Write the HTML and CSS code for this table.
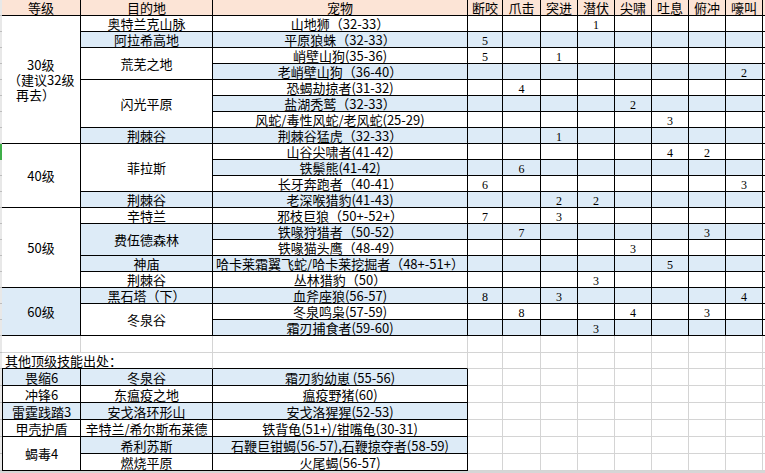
FILE: index.html
```html
<!DOCTYPE html>
<html lang="zh-CN">
<head>
<meta charset="utf-8">
<title>宠物技能出处</title>
<link rel="stylesheet" href="styles.css">
</head>
<body>
<div class="page">
  <div class="strip">
    <div></div><div></div><div></div><div></div><div></div><div></div><div></div>
    <div></div><div></div><div class="sel"></div><div></div><div></div><div></div><div></div>
    <div></div><div></div><div></div><div></div><div></div><div></div><div></div>
    <div class="t17"></div><div></div>
    <div class="t17"></div><div class="t17"></div><div class="t17"></div><div class="t17"></div><div class="t17"></div><div class="t17"></div>
  </div>
  <div class="sheet">
    <div class="top">
      <div class="r h"><div>等级</div><div>目的地</div><div>宠物</div><div>断咬</div><div>爪击</div><div>突进</div><div>潜伏</div><div>尖啸</div><div>吐息</div><div>俯冲</div><div>嚎叫</div><div></div></div>

      <div class="r"><div class="s8 w lv30"><span class="l1">30级</span><span class="l2">（建议32级</span><span class="l3">再去）</span></div><div>奥特兰克山脉</div><div>山地狮（32-33）</div><div></div><div></div><div></div><div class="n">1</div><div></div><div></div><div></div><div></div><div class="f"></div></div>
      <div class="r b"><div>阿拉希高地</div><div>平原狼蛛（32-33）</div><div class="n">5</div><div></div><div></div><div></div><div></div><div></div><div></div><div></div><div class="f"></div></div>
      <div class="r"><div class="s2">荒芜之地</div><div>峭壁山狗(35-36)</div><div class="n">5</div><div></div><div class="n">1</div><div></div><div></div><div></div><div></div><div></div><div class="f"></div></div>
      <div class="r b"><div>老峭壁山狗（36-40）</div><div></div><div></div><div></div><div></div><div></div><div></div><div></div><div class="n">2</div><div class="f"></div></div>
      <div class="r"><div class="s3">闪光平原</div><div>恐蝎劫掠者(31-32)</div><div></div><div class="n">4</div><div></div><div></div><div></div><div></div><div></div><div></div><div class="f"></div></div>
      <div class="r b"><div>盐湖秃鹫（32-33）</div><div></div><div></div><div></div><div></div><div class="n">2</div><div></div><div></div><div></div><div class="f"></div></div>
      <div class="r"><div>风蛇/毒性风蛇/老风蛇(25-29)</div><div></div><div></div><div></div><div></div><div></div><div class="n">3</div><div></div><div></div><div class="f"></div></div>
      <div class="r b"><div>荆棘谷</div><div>荆棘谷猛虎（32-33）</div><div></div><div></div><div class="n">1</div><div></div><div></div><div></div><div></div><div></div><div class="f"></div></div>

      <div class="r"><div class="s4">40级</div><div class="s3">菲拉斯</div><div>山谷尖啸者(41-42)</div><div></div><div></div><div></div><div></div><div></div><div class="n">4</div><div class="n">2</div><div></div><div class="f"></div></div>
      <div class="r b"><div>铁鬃熊(41-42)</div><div></div><div class="n">6</div><div></div><div></div><div></div><div></div><div></div><div></div><div class="f"></div></div>
      <div class="r"><div>长牙奔跑者（40-41）</div><div class="n">6</div><div></div><div></div><div></div><div></div><div></div><div></div><div class="n">3</div><div class="f"></div></div>
      <div class="r b"><div>荆棘谷</div><div>老深喉猎豹(41-43)</div><div></div><div></div><div class="n">2</div><div class="n">2</div><div></div><div></div><div></div><div></div><div class="f"></div></div>

      <div class="r"><div class="s5">50级</div><div>辛特兰</div><div>邪枝巨狼（50+-52+）</div><div class="n">7</div><div></div><div class="n">3</div><div></div><div></div><div></div><div></div><div></div><div class="f"></div></div>
      <div class="r b"><div class="s2">费伍德森林</div><div>铁喙狩猎者（50-52）</div><div></div><div class="n">7</div><div></div><div></div><div></div><div></div><div class="n">3</div><div></div><div class="f"></div></div>
      <div class="r"><div>铁喙猫头鹰（48-49）</div><div></div><div></div><div></div><div></div><div class="n">3</div><div></div><div></div><div></div><div class="f"></div></div>
      <div class="r b"><div>神庙</div><div>哈卡莱霜翼飞蛇/哈卡莱挖掘者（48+-51+）</div><div></div><div></div><div></div><div></div><div></div><div class="n">5</div><div></div><div></div><div class="f"></div></div>
      <div class="r"><div>荆棘谷</div><div>丛林猎豹（50）</div><div></div><div></div><div></div><div class="n">3</div><div></div><div></div><div></div><div></div><div class="f"></div></div>

      <div class="r b"><div class="s3">60级</div><div>黑石塔（下）</div><div>血斧座狼(56-57)</div><div class="n">8</div><div></div><div class="n">3</div><div></div><div></div><div></div><div></div><div class="n">4</div><div class="f"></div></div>
      <div class="r"><div class="s2">冬泉谷</div><div>冬泉鸣枭(57-59)</div><div></div><div class="n">8</div><div></div><div></div><div class="n">4</div><div></div><div class="n">3</div><div></div><div class="f"></div></div>
      <div class="r b"><div>霜刃捕食者(59-60)</div><div></div><div></div><div></div><div class="n">3</div><div></div><div></div><div></div><div></div><div class="f"></div></div>
    </div>

    <div class="bot">
      <div></div><div></div><div></div><div></div><div></div><div></div><div></div><div></div><div></div><div></div><div></div><div class="e"></div>

      <div class="c2 txt tb">其他顶级技能出处：</div><div class="tb"></div><div></div><div></div><div></div><div></div><div></div><div></div><div></div><div></div><div class="e"></div>

      <div class="k k1 bl">畏缩6</div><div class="k bl">冬泉谷</div><div class="k bl">霜刃豹幼崽 (55-56)</div><div></div><div></div><div></div><div></div><div></div><div></div><div></div><div></div><div class="e"></div>
      <div class="k k1">冲锋6</div><div class="k">东瘟疫之地</div><div class="k">瘟疫野猪(60)</div><div></div><div></div><div></div><div></div><div></div><div></div><div></div><div></div><div class="e"></div>
      <div class="k k1 bl">雷霆践踏3</div><div class="k bl">安戈洛环形山</div><div class="k bl">安戈洛猩猩(52-53)</div><div></div><div></div><div></div><div></div><div></div><div></div><div></div><div></div><div class="e"></div>
      <div class="k k1">甲壳护盾</div><div class="k">辛特兰/希尔斯布莱德</div><div class="k">铁背龟(51+)/钳嘴龟(30-31)</div><div></div><div></div><div></div><div></div><div></div><div></div><div></div><div></div><div class="e"></div>
      <div class="k k1 s2">蝎毒4</div><div class="k bl">希利苏斯</div><div class="k bl">石鞭巨钳蝎(56-57),石鞭掠夺者(58-59)</div><div></div><div></div><div></div><div></div><div></div><div></div><div></div><div></div><div class="e"></div>
      <div class="k">燃烧平原</div><div class="k">火尾蝎(56-57)</div><div></div><div></div><div></div><div></div><div></div><div></div><div></div><div></div><div class="e"></div>
    </div>
  </div>
</div>
<div class="hbar"></div>
</body>
</html>
```

FILE: styles.css
```css
* { box-sizing: border-box; }
html, body { margin: 0; padding: 0; }
body {
  width: 765px;
  height: 473px;
  overflow: hidden;
  background: #fff;
  color: #000;
  font-family: "Noto Sans CJK SC", "Noto Sans", sans-serif;
  font-size: 13px;
}
.page { display: flex; }

/* row header edge */
.strip { width: 2px; display: flex; flex-direction: column; }
.strip div { height: 16px; flex: none; background: #e8e8e8; border-bottom: 1px solid #bdbdbd; }
.strip .t17 { height: 17px; }
.strip .sel { background: #3fae49; border-bottom-color: #3fae49; }

.sheet { width: 763px; }

/* main table: black gaps form the borders */
.top {
  display: grid;
  grid-template-columns: 78px 131px 254px 34px 37px 36px 36px 36px 36px 36px 36px 2px;
  grid-template-rows: repeat(21, 15px);
  gap: 1px;
  padding-bottom: 1px;
  background: #000;
}
.r { display: contents; }
.r > div {
  background: #fff;
  display: flex;
  align-items: center;
  justify-content: center;
  text-align: center;
  line-height: 15px;
  white-space: nowrap;
}
.r.h > div { background: #fce4d6; }
.r.b > div { background: #ddebf7; }
.r > div.w, .r > div.f { background: #fff; }
.r > div.bl { background: #ddebf7; }
.r > div.n {
  font-family: "Liberation Serif", "DejaVu Serif", serif;
  font-size: 12px;
  align-items: flex-end;
  line-height: 11px;
}
.s2 { grid-row: span 2; }
.s3 { grid-row: span 3; }
.s4 { grid-row: span 4; }
.s5 { grid-row: span 5; }
.s8 { grid-row: span 8; }

.r > div.lv30 {
  flex-direction: column;
  align-items: flex-start;
  justify-content: center;
  line-height: 15px;
}
.lv30 .l1 { margin-left: 25px; }
.lv30 .l2 { margin-left: 6px; }
.lv30 .l3 { margin-left: 14px; }

/* lower area with grey gridlines */
.bot {
  display: grid;
  grid-template-columns: 79px 132px 255px 35px 38px 37px 37px 37px 37px 37px 37px 2px;
  grid-template-rows: 17px 16px repeat(6, 17px);
}
.bot > div {
  background: #fff;
  border-right: 1px solid #d4d4d4;
  border-bottom: 1px solid #d4d4d4;
  display: flex;
  align-items: center;
  justify-content: center;
  line-height: 15px;
  white-space: nowrap;
}
.bot > .e { border-right: 0; }
.bot > .tb { border-bottom-color: #000; }
.bot > .k { border-right-color: #000; border-bottom-color: #000; }
.bot > .k1 { border-left: 1px solid #000; }
.bot > .bl { background: #ddebf7; }
.bot > .txt { justify-content: flex-start; padding-left: 3px; }
.c2 { grid-column: span 2; }

.hbar { height: 3px; background: #d6d6d6; }
```
